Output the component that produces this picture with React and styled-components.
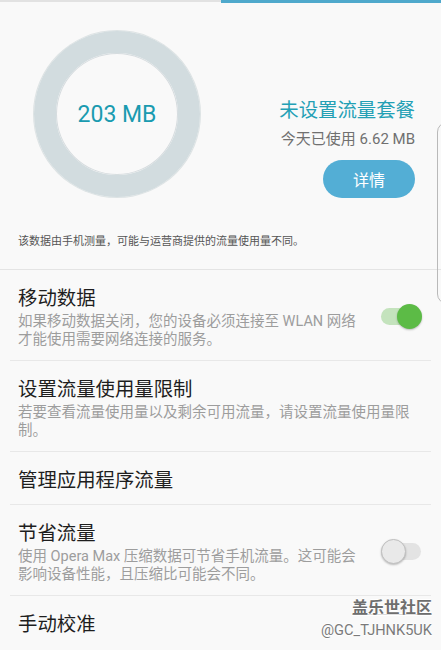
import React from 'react';
import styled, { createGlobalStyle } from 'styled-components';

const GlobalStyle = createGlobalStyle`
	html, body {
		margin: 0;
		padding: 0;
		background: #f9f9f9;
		overflow: hidden;
	}
	body {
		font-family: Roboto, "Noto Sans CJK SC", sans-serif;
	}
`;

const Screen = styled.div`
	position: relative;
	width: 441px;
	height: 650px;
	background: #f9f9f9;
	overflow: hidden;
`;

const TabBar = styled.div`
	display: flex;
	height: 3px;
	align-items: flex-start;
`;

const TabLine = styled.div`
	flex: 1;
	height: ${ ( p ) => ( p.active ? '3px' : '2px' ) };
	background: ${ ( p ) => ( p.active ? '#4fa9cc' : '#e2e2e2' ) };
`;

const Hero = styled.section`
	padding: 28px 26px 19px 18px;
	border-bottom: 1px solid #e4e4e4;
`;

const HeroRow = styled.div`
	display: flex;
	align-items: flex-end;
	justify-content: space-between;
	padding-left: 16px;
`;

const Ring = styled.div`
	width: 166px;
	height: 166px;
	box-sizing: border-box;
	border-radius: 50%;
	border: 22px solid #d2dcdf;
	box-shadow: 0 0 0 1px rgba( 170, 185, 190, 0.35 ),
		inset 0 0 0 1px rgba( 170, 185, 190, 0.45 );
	display: flex;
	align-items: center;
	justify-content: center;
	font-family: Roboto, sans-serif;
	font-size: 23px;
	color: #1a9bb0;
`;

const Info = styled.div`
	display: flex;
	flex-direction: column;
	align-items: flex-end;
	margin-bottom: -1px;
`;

const PlanTitle = styled.div`
	font-size: 19.4px;
	line-height: 24px;
	color: #23a0b5;
`;

const Usage = styled.div`
	margin-top: 6px;
	font-size: 15px;
	line-height: 20px;
	color: #707070;
`;

const PillButton = styled.button`
	margin-top: 11px;
	width: 92px;
	height: 38px;
	border: none;
	border-radius: 19px;
	background: #53aed5;
	color: #fff;
	font-family: Roboto, "Noto Sans CJK SC", sans-serif;
	font-size: 16px;
	padding: 0;
`;

const Caption = styled.p`
	margin: 37px 0 0;
	font-size: 11px;
	line-height: 16px;
	color: #555;
`;

const List = styled.div`
	display: flex;
	flex-direction: column;
`;

const Row = styled.div`
	display: flex;
	align-items: center;
	margin: 0 10px;
	padding: 17px 9px 11px 8px;
	border-bottom: ${ ( p ) => ( p.last ? 'none' : '1px solid #e8e8e8' ) };
`;

const RowText = styled.div`
	flex: 1;
	min-width: 0;
`;

const Title = styled.div`
	font-size: 19.4px;
	line-height: 24px;
	color: #1e1e1e;
`;

const Sub = styled.div`
	margin-top: 2px;
	font-size: 14.5px;
	line-height: 18px;
	color: #9d9d9d;
`;

const Switch = styled.div`
	position: relative;
	flex: none;
	width: 41px;
	height: 25px;
	margin-left: 20px;
	margin-top: -4px;
	display: flex;
	align-items: center;

	&::before {
		content: '';
		display: block;
		width: 40px;
		height: 17px;
		border-radius: 9px;
		background: ${ ( p ) => ( p.on ? '#c4e3bd' : '#e3e3e3' ) };
	}

	&::after {
		content: '';
		position: absolute;
		top: 0;
		${ ( p ) => ( p.on ? 'right: 0;' : 'left: 0;' ) }
		width: 25px;
		height: 25px;
		box-sizing: border-box;
		border-radius: 50%;
		background: ${ ( p ) => ( p.on ? '#5cbb46' : '#e9e9e9' ) };
		border: ${ ( p ) => ( p.on ? 'none' : '1.5px solid #bfbfbf' ) };
		box-shadow: 0 1px 2px rgba( 0, 0, 0, 0.25 );
	}
`;

const EdgeHandle = styled.div`
	position: absolute;
	left: 437px;
	top: 122px;
	width: 24px;
	height: 180px;
	border: 1px solid #b9b9b9;
	border-radius: 10px;
`;

const Watermark = styled.div`
	position: absolute;
	right: 9px;
	top: 598px;
	display: flex;
	flex-direction: column;
	align-items: flex-end;
	text-shadow: 0 1px 0 #fff, 0 -1px 0 #fff;
`;

const MarkName = styled.div`
	font-size: 16px;
	line-height: 20px;
	font-weight: 700;
	color: #6e6e6e;
	text-decoration: underline;
	text-decoration-color: rgba( 0, 0, 0, 0.12 );
	text-underline-offset: 1px;
`;

const MarkId = styled.div`
	margin-top: 3px;
	font-family: Roboto, sans-serif;
	font-size: 14.6px;
	line-height: 18px;
	color: #7a7a7a;
`;

const rows = [
	{
		title: '移动数据',
		sub: '如果移动数据关闭，您的设备必须连接至 WLAN 网络才能使用需要网络连接的服务。',
		toggle: true,
	},
	{
		title: '设置流量使用量限制',
		sub: '若要查看流量使用量以及剩余可用流量，请设置流量使用量限制。',
	},
	{ title: '管理应用程序流量' },
	{
		title: '节省流量',
		sub: '使用 Opera Max 压缩数据可节省手机流量。这可能会影响设备性能，且压缩比可能会不同。',
		toggle: false,
	},
	{ title: '手动校准' },
];

export default function App() {
	return (
		<Screen>
			<GlobalStyle />
			<TabBar>
				<TabLine />
				<TabLine active />
			</TabBar>
			<Hero>
				<HeroRow>
					<Ring>203 MB</Ring>
					<Info>
						<PlanTitle>未设置流量套餐</PlanTitle>
						<Usage>今天已使用 6.62 MB</Usage>
						<PillButton>详情</PillButton>
					</Info>
				</HeroRow>
				<Caption>该数据由手机测量，可能与运营商提供的流量使用量不同。</Caption>
			</Hero>
			<List>
				{ rows.map( ( row, i ) => (
					<Row key={ row.title } last={ i === rows.length - 1 }>
						<RowText>
							<Title>{ row.title }</Title>
							{ row.sub && <Sub>{ row.sub }</Sub> }
						</RowText>
						{ row.toggle !== undefined && <Switch on={ row.toggle } /> }
					</Row>
				) ) }
			</List>
			<EdgeHandle />
			<Watermark>
				<MarkName>盖乐世社区</MarkName>
				<MarkId>@GC_TJHNK5UK</MarkId>
			</Watermark>
		</Screen>
	);
}
